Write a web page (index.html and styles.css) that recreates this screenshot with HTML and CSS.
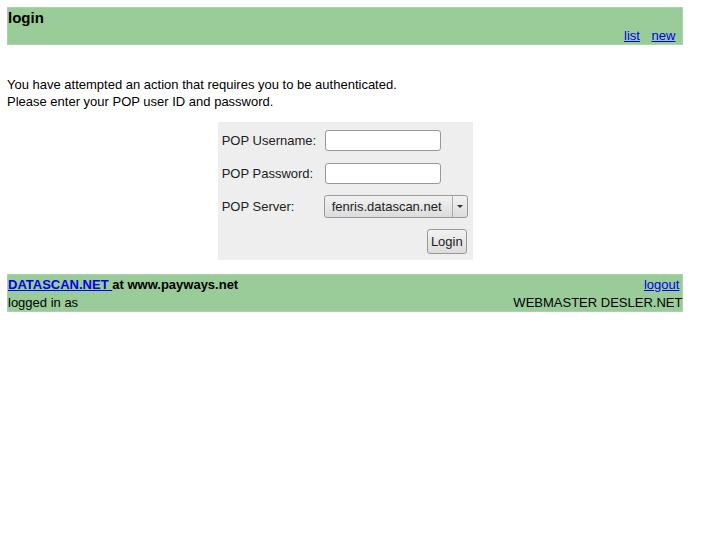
FILE: index.html
```html
<!DOCTYPE html>
<html lang="en">

<head>
    <meta charset="UTF-8">
    <meta name="viewport" content="width=device-width, initial-scale=1.0">
    <title>login</title>
    <link rel="stylesheet" href="styles.css">
</head>

<body>
    <div class="page">
        <div class="bar">
            <div class="bar-row">
                <span class="title">login</span>
            </div>
            <div class="bar-row right">
                <span class="links"><a href="#">list</a> <a href="#">new</a></span>
            </div>
        </div>

        <div class="message">
            You have attempted an action that requires you to be authenticated.<br>
            Please enter your POP user ID and password.
        </div>

        <form class="loginbox">
            <label for="user">POP Username:</label>
            <input type="text" id="user" class="field">
            <label for="pass">POP Password:</label>
            <input type="password" id="pass" class="field">
            <label for="server">POP Server:</label>
            <div class="select">
                <span class="select-value">fenris.datascan.net</span>
                <span class="select-arrow"></span>
            </div>
            <div class="actions">
                <button type="button" class="btn">Login</button>
            </div>
        </form>

        <div class="bar footer">
            <div class="bar-row split">
                <span class="bold"><a href="#">DATASCAN.NET </a>at www.payways.net</span>
                <a href="#" class="logout">logout</a>
            </div>
            <div class="bar-row split">
                <span>logged in as</span>
                <span>WEBMASTER DESLER.NET</span>
            </div>
        </div>
    </div>
</body>

</html>
```

FILE: styles.css
```css
body {
    margin: 7px 8px 7px 7px;
    font-family: "Liberation Sans", Arial, sans-serif;
    font-size: 13px;
    color: #000;
}

a {
    color: #0000ee;
}

.page {
    width: 95%;
}

.bar {
    box-sizing: border-box;
    background-color: #99cc99;
    border: 1px solid #a8d4a8;
}

.bar-row {
    display: flex;
    height: 18px;
    align-items: center;
}

.right {
    justify-content: flex-end;
}

.split {
    justify-content: space-between;
}

.title {
    font-weight: bold;
    font-size: 15px;
}

.links {
    margin-right: 7px;
}

.links a {
    margin-left: 8px;
}

.logout {
    margin-right: 3px;
}

.bold {
    font-weight: bold;
}

.message {
    margin-top: 31px;
    line-height: 17px;
}

.loginbox {
    display: grid;
    grid-template-columns: 102px 144px;
    grid-template-rows: 32px 34px 33px 36px;
    align-items: center;
    width: 246px;
    margin: 12px auto 14px;
    padding: 2px 5px 1px 4px;
    background-color: #eeeeee;
    font-size: 13px;
    color: #222;
}

.field {
    width: 110px;
    height: 17px;
    padding: 1px 2px;
    border: 1px solid #999;
    border-radius: 3px;
    background: #fff;
    margin: 0 0 0 1px;
}

.select {
    display: flex;
    height: 21px;
    border: 1px solid #999;
    border-radius: 3px;
    background: linear-gradient(#f2f2f2, #dcdcdc);
}

.select-value {
    flex: 1;
    padding: 3px 0 0 7px;
}

.select-arrow {
    width: 14px;
    border-left: 1px solid #aaa;
    position: relative;
}

.select-arrow::after {
    content: "";
    position: absolute;
    left: 4px;
    top: 9px;
    border-left: 3px solid transparent;
    border-right: 3px solid transparent;
    border-top: 3px solid #333;
}

.actions {
    grid-column: 1 / 3;
    display: flex;
    justify-content: flex-end;
    padding-right: 1px;
}

.btn {
    height: 25px;
    padding: 0 3px;
    border: 1px solid #999;
    border-radius: 3px;
    background: linear-gradient(#f2f2f2, #dcdcdc);
    font-family: "Liberation Sans", Arial, sans-serif;
    font-size: 13px;
    color: #222;
}
```
